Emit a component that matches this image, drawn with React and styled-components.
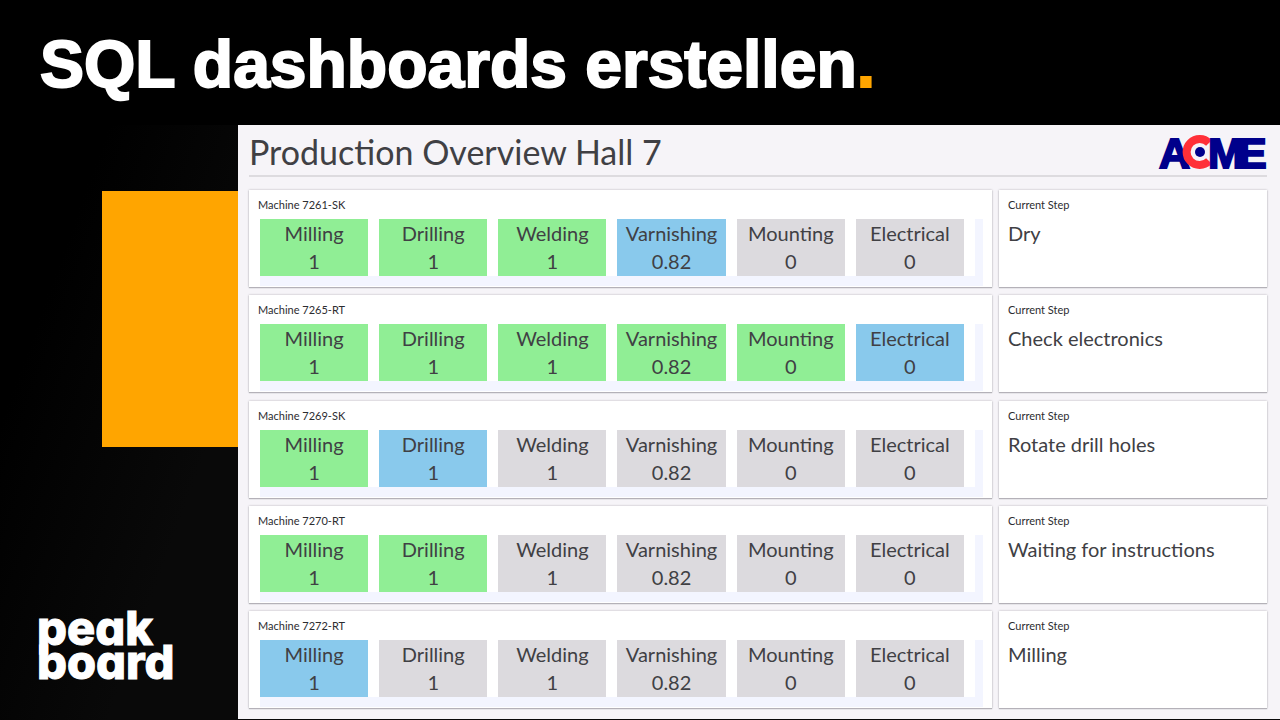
import React from "react";
import styled, { createGlobalStyle } from "styled-components";

const GlobalStyle = createGlobalStyle`
  *, *::before, *::after { box-sizing: border-box; }
  body { margin: 0; background: #000; }
  h1, h2, h3, p, dl, dt, dd, ul { margin: 0; padding: 0; font-weight: inherit; }
`;

const Page = styled.div`
  display: flex;
  flex-direction: column;
  min-height: 100vh;
  padding-bottom: 1px;
  background: linear-gradient(110deg, #000 0%, #000 10%, #090909 24%, #090909 100%);
`;

const Banner = styled.header`
  height: 125px;
  padding: 24px 40px 0;
  background: #000;
`;

const Headline = styled.h1`
  font: bold 66px/80px "Liberation Sans", Arial, sans-serif;
  color: #fff;
  -webkit-text-stroke: 2px currentColor;
  white-space: nowrap;
`;

const Accent = styled.span`
  color: #ffa500;
`;

const Stage = styled.div`
  display: flex;
  flex: 1;
`;

const Aside = styled.aside`
  display: flex;
  flex-direction: column;
  justify-content: space-between;
  width: 238px;
  flex-shrink: 0;
  padding: 66px 0 28px;
`;

const OrangeBlock = styled.div`
  align-self: flex-end;
  width: 136px;
  height: 256px;
  background: #ffa500;
`;

const BrandLogo = styled.svg`
  display: block;
  width: 160px;
  height: 92px;
  margin-left: 37px;
  overflow: visible;
  font: 800 47px Inter, "Liberation Sans", sans-serif;
  font-feature-settings: "cv11";
  fill: #fff;
  stroke: #fff;
  stroke-width: 1px;
`;

const Dashboard = styled.main`
  display: flex;
  flex: 1;
  flex-direction: column;
  min-width: 0;
  padding: 0 13px 11px 11px;
  background: #f6f4f8;
  color: #404044;
  font-family: Lato, "Open Sans", sans-serif;
`;

const DashboardHeader = styled.div`
  display: flex;
  align-items: center;
  justify-content: space-between;
  height: 52px;
  margin-bottom: 13px;
  padding-top: 4px;
  border-bottom: 2px solid #dddbdf;
`;

const Title = styled.h2`
  font-size: 34px;
  line-height: 44px;
`;

const AcmeLogo = styled.svg`
  display: block;
  width: 108px;
  height: 38px;
  overflow: visible;
  font: bold 43px "Liberation Sans", Arial, sans-serif;
`;

const Rows = styled.ul`
  display: flex;
  flex: 1;
  flex-direction: column;
  justify-content: space-between;
  list-style: none;
`;

const Row = styled.li`
  display: grid;
  grid-template-columns: 743fr 268fr;
  gap: 7px;
  height: 97px;
`;

const Card = styled.section`
  padding: 7px 9px 0;
  background: #fff;
  box-shadow: 0 0 2px #b4b2b8, 0 1px 1px #b4b2b8;
`;

const CardLabel = styled.h3`
  font-size: 11px;
  line-height: 16px;
  color: #2c2c30;
`;

const TileTray = styled.div`
  margin: 6px 0 0 2px;
  padding: 0 8px 10px 0;
  background: #f3f5ff;
`;

const Tiles = styled.dl`
  display: grid;
  grid-template-columns: repeat(6, 1fr);
  gap: 11px;
  padding-right: 11px;
  background: #fff;
`;

const tones = { done: "#90ee95", active: "#89c9ec", idle: "#dcdade" };

const Tile = styled.div`
  height: 57px;
  background: ${({ $tone }) => tones[$tone]};
  font-size: 20px;
  line-height: 28px;
  text-align: center;
  white-space: nowrap;
`;

const StepText = styled.p`
  margin-top: 6px;
  font-size: 20px;
  line-height: 28px;
`;

const stations = [
  ["Milling", "1"],
  ["Drilling", "1"],
  ["Welding", "1"],
  ["Varnishing", "0.82"],
  ["Mounting", "0"],
  ["Electrical", "0"],
];

const machines = [
  { name: "Machine 7261-SK", done: 3, active: 3, step: "Dry" },
  { name: "Machine 7265-RT", done: 5, active: 5, step: "Check electronics" },
  { name: "Machine 7269-SK", done: 1, active: 1, step: "Rotate drill holes" },
  { name: "Machine 7270-RT", done: 2, active: -1, step: "Waiting for instructions" },
  { name: "Machine 7272-RT", done: 0, active: 0, step: "Milling" },
];

const toneOf = (machine, index) =>
  index === machine.active ? "active" : index < machine.done ? "done" : "idle";

function PeakboardLogo() {
  return (
    <BrandLogo viewBox="0 0 160 92" role="img" aria-label="peakboard">
      <text x="0" y="46">peak</text>
      <text x="0" y="80">board</text>
    </BrandLogo>
  );
}

function Acme() {
  return (
    <AcmeLogo viewBox="0 0 108 38" role="img" aria-label="ACME">
      <text x="0" y="35" fill="#00008b" stroke="#00008b" strokeWidth="2">A</text>
      <circle cx="41" cy="19" r="13" fill="#f6f4f8" />
      <path d="M50 10A13 13 0 1 0 50 28" fill="none" stroke="#ff3038" strokeWidth="8" />
      <circle cx="41" cy="19" r="5" fill="#00008b" />
      <g fill="#00008b" stroke="#00008b" strokeWidth="2">
        <text x="49" y="35">M</text>
        <text x="79" y="35">E</text>
      </g>
    </AcmeLogo>
  );
}

export default function App() {
  return (
    <>
      <GlobalStyle />
      <Page>
        <Banner>
          <Headline>SQL dashboards erstellen<Accent>.</Accent></Headline>
        </Banner>
        <Stage>
          <Aside>
            <OrangeBlock />
            <PeakboardLogo />
          </Aside>
          <Dashboard>
            <DashboardHeader>
              <Title>Production Overview Hall 7</Title>
              <Acme />
            </DashboardHeader>
            <Rows>
              {machines.map((machine) => (
                <Row key={machine.name}>
                  <Card>
                    <CardLabel>{machine.name}</CardLabel>
                    <TileTray>
                      <Tiles>
                        {stations.map(([label, value], index) => (
                          <Tile key={label} $tone={toneOf(machine, index)}>
                            <dt>{label}</dt>
                            <dd>{value}</dd>
                          </Tile>
                        ))}
                      </Tiles>
                    </TileTray>
                  </Card>
                  <Card>
                    <CardLabel>Current Step</CardLabel>
                    <StepText>{machine.step}</StepText>
                  </Card>
                </Row>
              ))}
            </Rows>
          </Dashboard>
        </Stage>
      </Page>
    </>
  );
}
